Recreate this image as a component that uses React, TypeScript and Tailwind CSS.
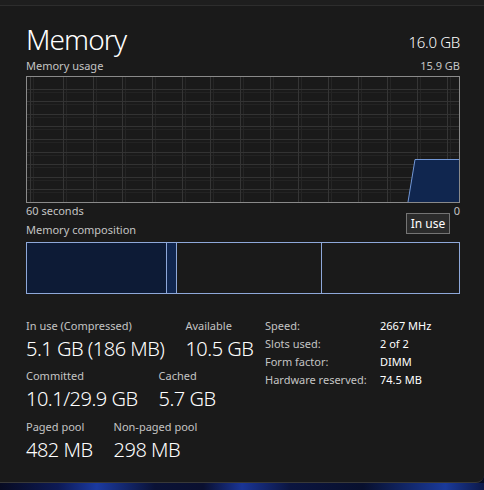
import React from 'react';

const verticals = [4, 37, 67, 96, 126, 156, 184, 214, 244, 272, 302, 332, 361, 391, 421];

function UsageChart() {
  const w = 434;
  const h = 127;
  const rows = Array.from({ length: 9 }, (_, i) => Math.round((i + 1) * 12.6) + 0.5);
  return (
    <svg width={w} height={h} viewBox={`0 0 ${w} ${h}`} className="block">
      {/* faint trailing grid */}
      {verticals.map((x) => (
        <line key={'f' + x} x1={x + 3.5} y1={0} x2={x + 3.5} y2={h} stroke="#252525" strokeWidth={1} />
      ))}
      {rows.map((y) => (
        <line key={'fh' + y} x1={0} y1={y + 3} x2={w} y2={y + 3} stroke="#232323" strokeWidth={1} />
      ))}
      {verticals.map((x) => (
        <line key={x} x1={x + 0.5} y1={0} x2={x + 0.5} y2={h} stroke="#353535" strokeWidth={1} />
      ))}
      {rows.map((y) => (
        <line key={'h' + y} x1={0} y1={y} x2={w} y2={y} stroke="#333333" strokeWidth={1} />
      ))}
      <polygon points="382,126 389,83 433,83 433,126" fill="#10264f" />
      <polyline points="382,126 389,83.5 433,83.5" fill="none" stroke="#7297d6" strokeWidth={1} />
      <rect x={0.5} y={0.5} width={w - 1} height={h - 1} fill="none" stroke="#8a8a8a" strokeWidth={1} />
    </svg>
  );
}

function Stat({ label, value, className = '' }: { label: string; value: string; className?: string }) {
  return (
    <div className={className}>
      <div className="text-[11px] leading-[14px] text-[#c4c4c4]">{label}</div>
      <div className="mt-[4px] text-[20px] leading-[24px] font-light tracking-[-0.5px] text-white whitespace-nowrap">
        {value}
      </div>
    </div>
  );
}

const specs = [
  ['Speed:', '2667 MHz'],
  ['Slots used:', '2 of 2'],
  ['Form factor:', 'DIMM'],
  ['Hardware reserved:', '74.5 MB'],
];

export default function App() {
  return (
    <div className="w-[484px] h-[490px] overflow-hidden flex flex-col bg-[#070c22] font-['Segoe_UI','Noto_Sans',sans-serif] text-white">
      <div className="flex-1 flex flex-col bg-[#1a1a1a] rounded-br-[8px] border-b border-[#383838]">
        <div className="h-[5px] bg-[#1e1e1e]" />
        <div className="h-px bg-[#2d2d2d]" />

        <div className="px-[26px] w-[485px]">
          {/* header */}
          <div className="mt-[16px] flex justify-between items-start w-[434px]">
            <div className="text-[28px] leading-[34px] font-light tracking-[-0.9px] text-white">Memory</div>
            <div className="mt-[10px] text-[15px] leading-[20px] font-light tracking-[-0.3px] text-white">16.0 GB</div>
          </div>

          <div className="mt-[3px] flex justify-between w-[434px] text-[11px] leading-[14px] text-[#c4c4c4]">
            <span>Memory usage</span>
            <span>15.9 GB</span>
          </div>

          <div className="mt-[3px]">
            <UsageChart />
          </div>

          <div className="relative mt-[1px] flex justify-between w-[434px] text-[11px] leading-[14px] text-[#c4c4c4]">
            <span>60 seconds</span>
            <span>0</span>
            <div className="absolute left-[380px] top-[9px] w-[44px] h-[21px] bg-[#2b2b2b] border border-[#747474] flex items-center justify-center text-[12px] text-white">
              In use
            </div>
          </div>

          <div className="mt-[5px] text-[11px] leading-[14px] text-[#c4c4c4]">Memory composition</div>

          <div className="mt-[5px] w-[434px] h-[52px] border border-[#8ea8d9] flex">
            <div className="w-[140px] bg-[#0d1b36] border-r border-[#8ea8d9]" />
            <div className="w-[10px] bg-[#10264f] border-r border-[#8ea8d9]" />
            <div className="w-[145px] border-r border-[#8ea8d9]" />
            <div className="flex-1" />
          </div>

          {/* stats */}
          <div className="mt-[25px] flex items-start">
            <div className="w-[239px] flex flex-col">
              <div className="flex gap-[21px]">
                <Stat label="In use (Compressed)" value="5.1 GB (186 MB)" />
                <Stat label="Available" value="10.5 GB" />
              </div>
              <div className="mt-[8px] flex gap-[21px]">
                <Stat label="Committed" value="10.1/29.9 GB" />
                <Stat label="Cached" value="5.7 GB" />
              </div>
              <div className="mt-[9px] flex gap-[21px]">
                <Stat label="Paged pool" value="482 MB" />
                <Stat label="Non-paged pool" value="298 MB" />
              </div>
            </div>
            <div className="-mt-[2px] grid grid-cols-[115px_auto] text-[11px] leading-[18px]">
              {specs.map(([k, v]) => (
                <React.Fragment key={k}>
                  <span className="text-[#c4c4c4]">{k}</span>
                  <span className="text-white">{v}</span>
                </React.Fragment>
              ))}
            </div>
          </div>
        </div>
      </div>
      <div className="h-[7px] bg-[linear-gradient(90deg,#070b22_0%,#0d1a55_12%,#1b3aa0_20%,#0a1236_32%,#0a1030_42%,#1a3596_50%,#0b1540_60%,#08102e_75%,#1a3a9a_92%,#0c1848_100%)]" />
    </div>
  );
}
